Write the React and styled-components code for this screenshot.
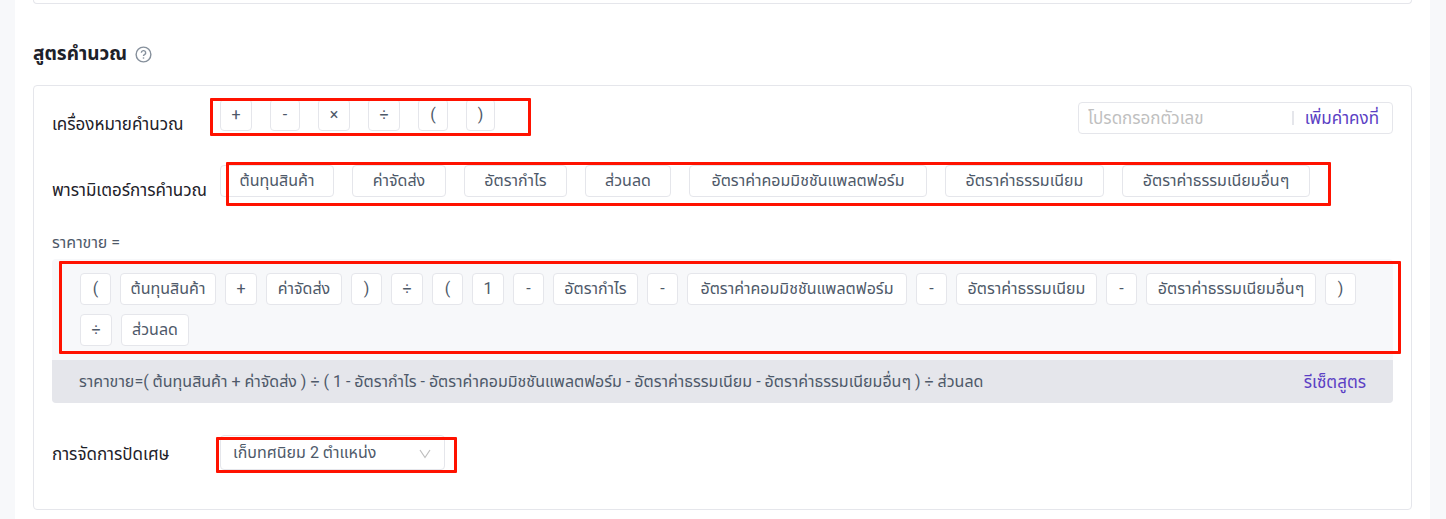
import { useState } from "react";
import styled, { createGlobalStyle } from "styled-components";

const operators = [
  { text: "+", width: 32 },
  { text: "-", width: 30 },
  { text: "×", width: 32 },
  { text: "÷", width: 32 },
  { text: "(", width: 30 },
  { text: ")", width: 29 },
];

const params = [
  { text: "ต้นทุนสินค้า", width: 96 },
  { text: "ค่าจัดส่ง", width: 76 },
  { text: "อัตรากำไร", width: 85 },
  { text: "ส่วนลด", width: 68 },
  { text: "อัตราค่าคอมมิชชันแพลตฟอร์ม", width: 220 },
  { text: "อัตราค่าธรรมเนียม", width: 141 },
  { text: "อัตราค่าธรรมเนียมอื่นๆ", width: 170 },
];

const defaultFormula = [
  "(",
  "ต้นทุนสินค้า",
  "+",
  "ค่าจัดส่ง",
  ")",
  "÷",
  "(",
  "1",
  "-",
  "อัตรากำไร",
  "-",
  "อัตราค่าคอมมิชชันแพลตฟอร์ม",
  "-",
  "อัตราค่าธรรมเนียม",
  "-",
  "อัตราค่าธรรมเนียมอื่นๆ",
  ")",
  "÷",
  "ส่วนลด",
];

const tokenWidth = (text) => {
  const param = params.find((item) => item.text === text);
  if (param) return param.width;
  return ["(", ")", "-"].includes(text) ? 31 : 32;
};

function App() {
  const [formula, setFormula] = useState(defaultFormula);
  const [constant, setConstant] = useState("");

  const add = (text) => setFormula([...formula, text]);

  const addConstant = () => {
    if (!constant) return;
    add(constant);
    setConstant("");
  };

  return (
    <>
      <GlobalStyle />
      <StPage>
        <StPrevCard />
        <StTitle>
          สูตรคำนวณ
          <StHelp viewBox="0 0 18 18" aria-hidden="true">
            <circle cx="9" cy="9" r="7.8" />
            <path d="M6.7 7.2a2.3 2.3 0 1 1 3.4 2c-.8.4-1.1.8-1.1 1.5" />
            <path d="M9 12v1.4" />
          </StHelp>
        </StTitle>
        <StCard>
          <StRow>
            <StLabel>เครื่องหมายคำนวณ</StLabel>
            <StMarked $mark="-1px -36px -5px -10px">
              <StChips>
                {operators.map(({ text, width }) => (
                  <StChip key={text} type="button" $width={width} onClick={() => add(text)}>
                    {text}
                  </StChip>
                ))}
              </StChips>
            </StMarked>
            <StConstant>
              <StInput
                aria-label="โปรดกรอกตัวเลข"
                placeholder="โปรดกรอกตัวเลข"
                value={constant}
                onChange={(e) => setConstant(e.target.value)}
              />
              <StDivider />
              <StTextButton type="button" onClick={addConstant}>
                เพิ่มค่าคงที่
              </StTextButton>
            </StConstant>
          </StRow>
          <StRow>
            <StLabel>พารามิเตอร์การคำนวณ</StLabel>
            <StMarked $mark="-3px -21px -9px 6px">
              <StChips>
                {params.map(({ text, width }) => (
                  <StChip key={text} type="button" $width={width + 18} onClick={() => add(text)}>
                    {text}
                  </StChip>
                ))}
              </StChips>
            </StMarked>
          </StRow>
          <StResultLabel>ราคาขาย =</StResultLabel>
          <StMarked $mark="2px -8px 49px 7px">
            <StFormula>
              {formula.map((text, i) => (
                <StToken key={i} $width={tokenWidth(text)}>
                  {text}
                </StToken>
              ))}
            </StFormula>
            <StSummary>
              <span>ราคาขาย={formula.join(" ")}</span>
              <StTextButton type="button" onClick={() => setFormula(defaultFormula)}>
                รีเซ็ตสูตร
              </StTextButton>
            </StSummary>
          </StMarked>
          <StRounding>
            <StRoundingLabel as="label" htmlFor="rounding">
              การจัดการปัดเศษ
            </StRoundingLabel>
            <StMarked $mark="2px -12px -3px -4px">
              <StSelectBox>
                <StSelect id="rounding">
                  <option>เก็บทศนิยม 2 ตำแหน่ง</option>
                </StSelect>
                <StArrow viewBox="0 0 12 10" aria-hidden="true">
                  <path d="M1 1l5 7.5L11 1" />
                </StArrow>
              </StSelectBox>
            </StMarked>
          </StRounding>
        </StCard>
      </StPage>
    </>
  );
}

const GlobalStyle = createGlobalStyle`
  * {
    box-sizing: border-box;
  }
  body {
    margin: 0;
    background: #f7f8fa;
    color: #4e5969;
    font: 16px/24px Roboto, "Noto Sans Thai", "Noto Sans", sans-serif;
  }
  button, input, select {
    font: inherit;
    color: inherit;
  }
`;

const StPage = styled.main`
  min-height: 100vh;
  margin: 0 16px 0 15px;
  padding: 0 18px 9px;
  background: #fff;
`;

const StPrevCard = styled.div`
  height: 4px;
  border: 1px solid #e5e6eb;
  border-top: 0;
  border-radius: 0 0 4px 4px;
`;

const StTitle = styled.h2`
  display: flex;
  align-items: center;
  gap: 8px;
  margin: 38px 0 19px;
  color: #1d2129;
  font-size: 19px;
  font-weight: 700;
  line-height: 24px;
`;

const StHelp = styled.svg`
  width: 17px;
  height: 17px;
  fill: none;
  stroke: #86909c;
  stroke-width: 1.5;
`;

const StCard = styled.section`
  padding: 13px 18px 39px;
  border: 1px solid #e5e6eb;
  border-radius: 4px;
`;

const StRow = styled.div`
  display: flex;
  align-items: flex-start;
  margin-bottom: 29px;
`;

const StLabel = styled.div`
  flex: none;
  width: 168px;
  padding-top: 13px;
  color: #1d2129;
  font-size: 17px;
`;

const StRoundingLabel = styled(StLabel)`
  padding-top: 7px;
`;

/* red frame laid over a group of controls */
const StMarked = styled.div`
  position: relative;

  &::after {
    content: "";
    position: absolute;
    inset: ${(props) => props.$mark};
    border: 3px solid #ff1200;
    border-radius: 1px;
    pointer-events: none;
  }
`;

const StChips = styled.div`
  display: flex;
  gap: 18px;
`;

const StChip = styled.button`
  min-width: ${(props) => props.$width}px;
  height: 32px;
  padding: 0;
  border: 1px solid #e5e6eb;
  border-radius: 4px;
  background: #fff;
  white-space: nowrap;
  cursor: pointer;
`;

const StConstant = styled.div`
  display: flex;
  align-items: center;
  width: 315px;
  height: 32px;
  margin: 3px 0 0 auto;
  padding: 0 13px 0 9px;
  border: 1px solid #e5e6eb;
  border-radius: 4px;
`;

const StInput = styled.input`
  flex: 1;
  min-width: 0;
  padding: 0;
  border: 0;
  outline: 0;
  background: none;
  font-size: 17px;

  &::placeholder {
    color: #bfbfbf;
  }
`;

const StDivider = styled.span`
  width: 2px;
  height: 14px;
  margin-right: 11px;
  background: #e5e6eb;
`;

const StTextButton = styled.button`
  padding: 0;
  border: 0;
  background: none;
  color: #5b3fc4;
  font-size: 17px;
  white-space: nowrap;
  cursor: pointer;
`;

const StResultLabel = styled.div`
  margin-bottom: 4px;
`;

const StFormula = styled.div`
  display: flex;
  flex-wrap: wrap;
  gap: 9px;
  padding: 14px 28px;
  border-radius: 4px 4px 0 0;
  background: #f7f8fa;
`;

const StToken = styled.span`
  min-width: ${(props) => props.$width}px;
  height: 32px;
  padding: 3px 0;
  border: 1px solid #e5e6eb;
  border-radius: 4px;
  background: #fff;
  text-align: center;
  white-space: nowrap;
`;

const StSummary = styled.div`
  display: flex;
  align-items: center;
  justify-content: space-between;
  height: 43px;
  padding: 0 27px;
  border-radius: 0 0 4px 4px;
  background: #e5e6eb;
`;

const StRounding = styled.div`
  display: flex;
  align-items: flex-start;
  height: 35px;
  margin-top: 32px;
`;

const StSelectBox = styled.div`
  position: relative;
  width: 225px;
`;

const StSelect = styled.select`
  display: block;
  width: 100%;
  height: 35px;
  padding: 0 36px 0 12px;
  border: 1px solid #e5e6eb;
  border-radius: 4px;
  background: #fff;
  appearance: none;
`;

const StArrow = styled.svg`
  position: absolute;
  top: 14px;
  right: 14px;
  width: 12px;
  height: 10px;
  fill: none;
  stroke: #bfbfbf;
  stroke-width: 1.2;
  pointer-events: none;
`;

export default App;
